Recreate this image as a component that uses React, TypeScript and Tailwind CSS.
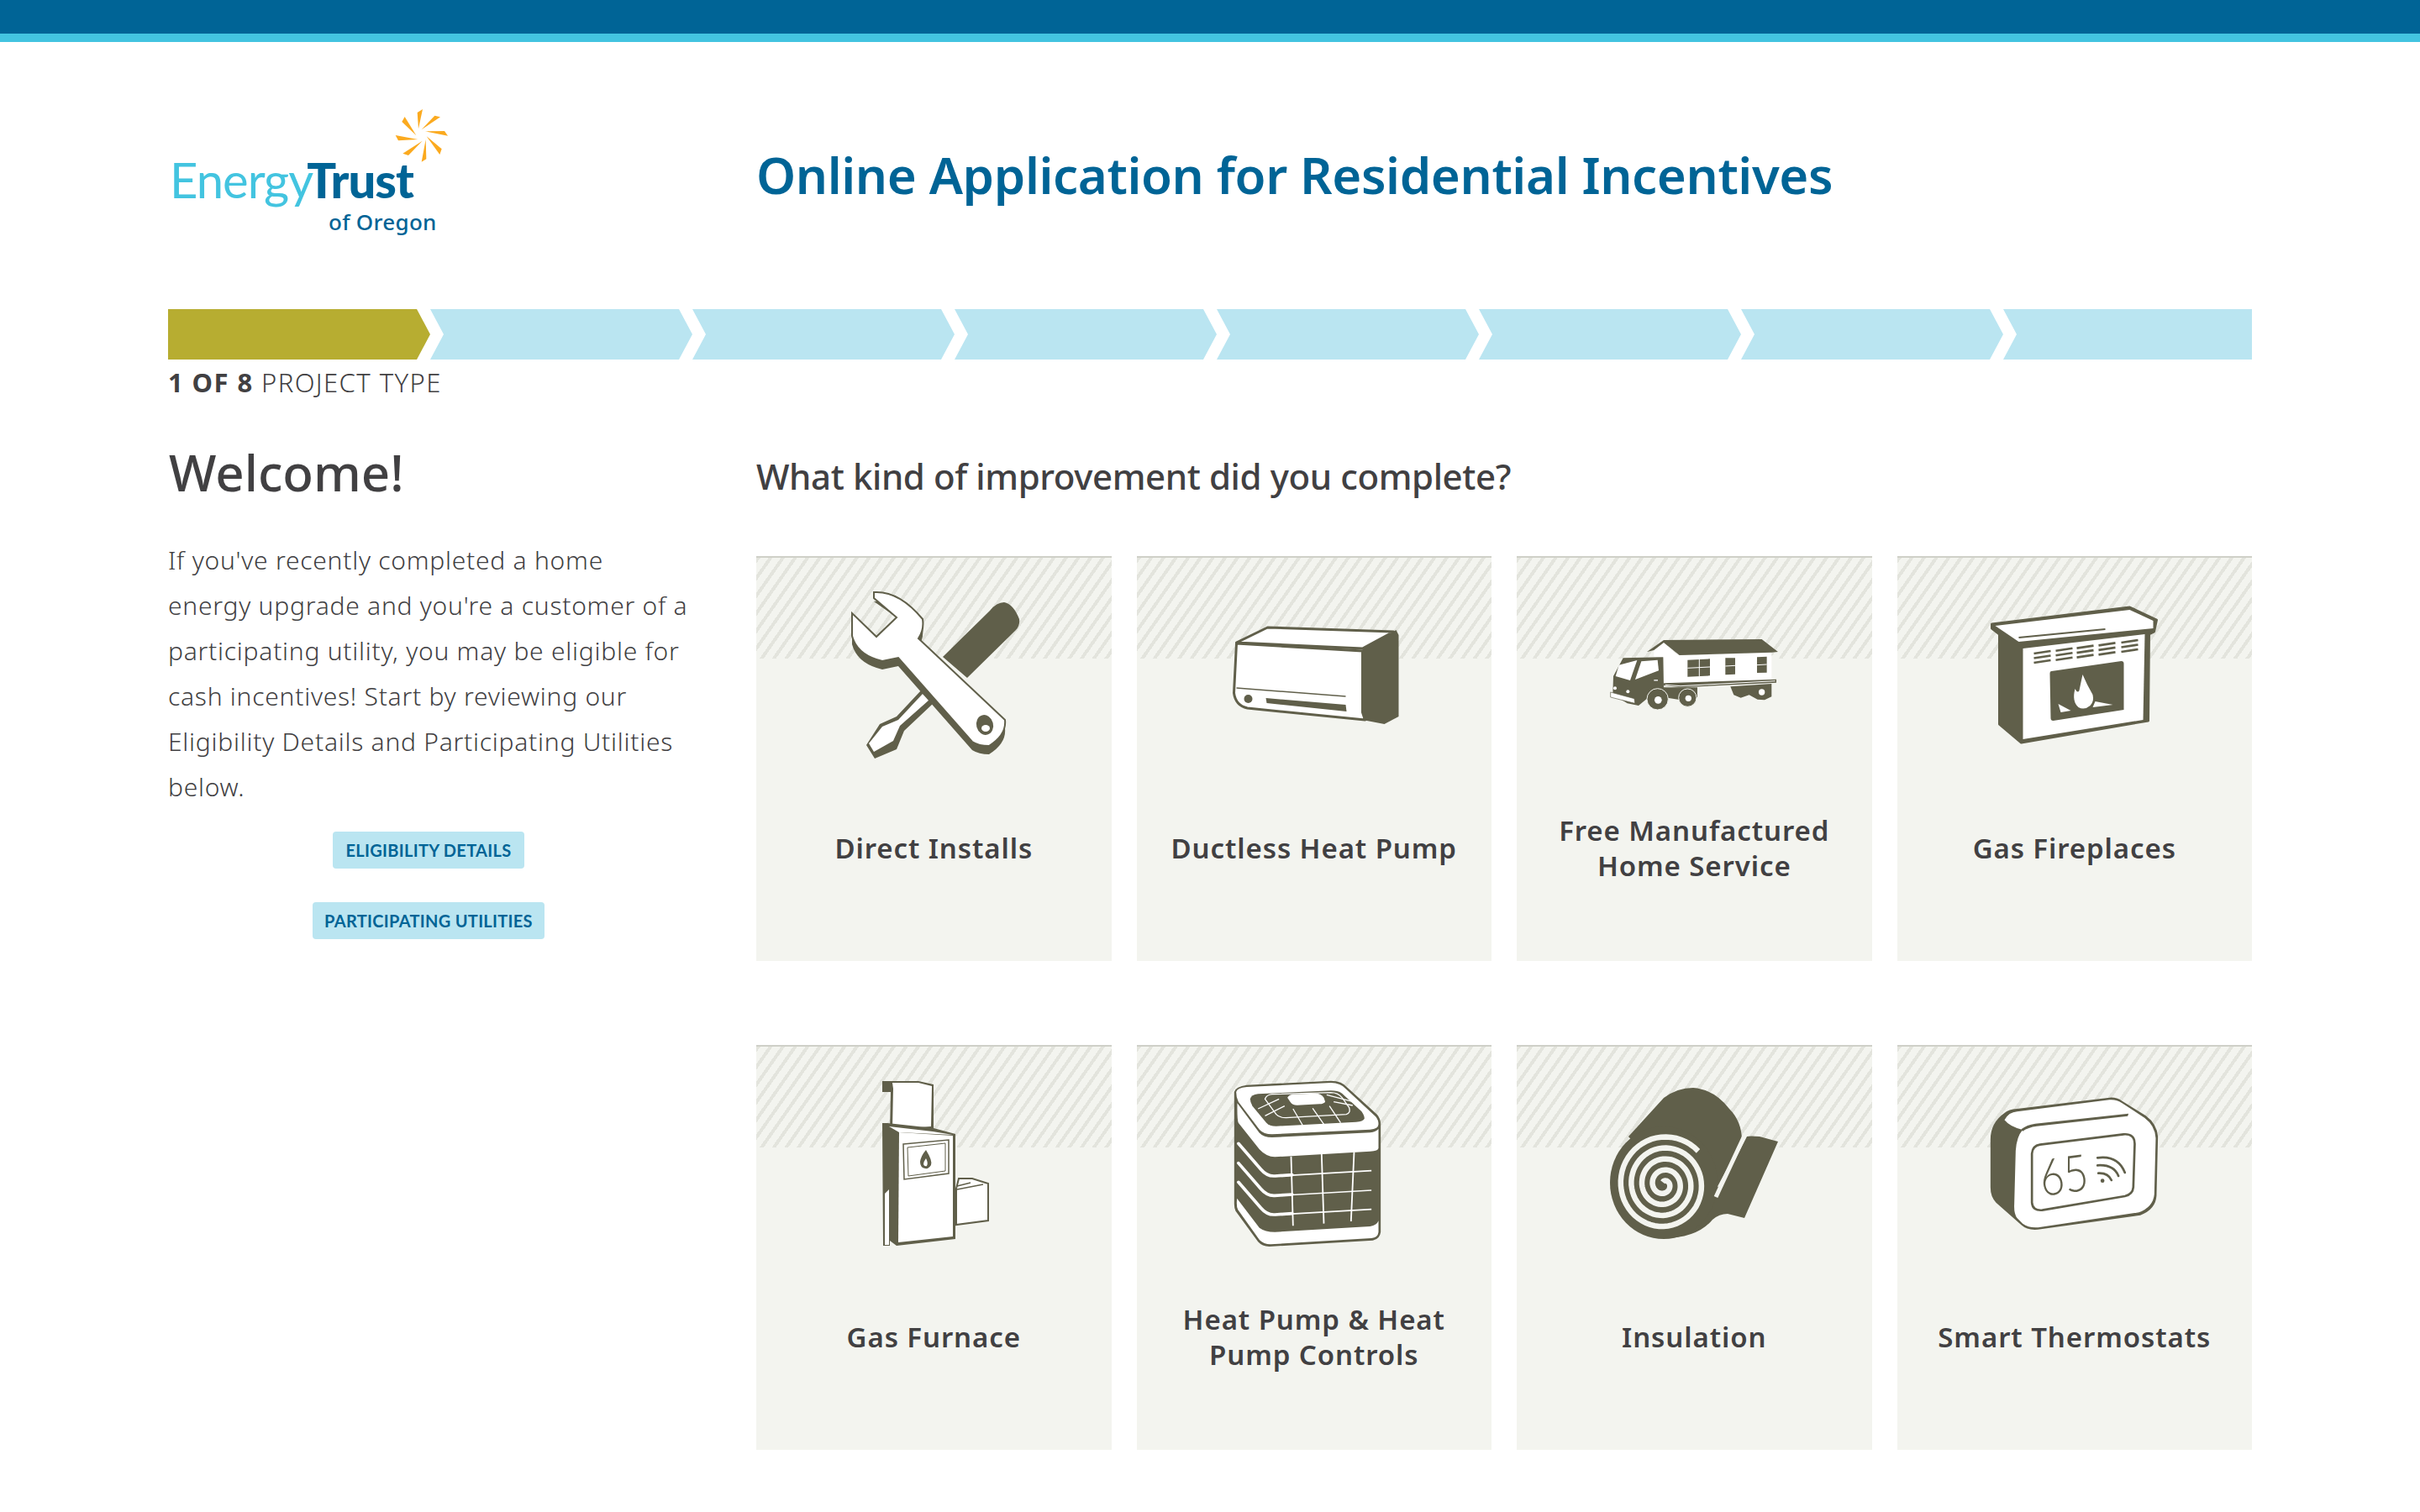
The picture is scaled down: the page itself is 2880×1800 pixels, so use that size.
const INK = "#605f4a";
const BG = "#f3f4ef";

function spiral(cx: number, cy: number, r0: number, r1: number, turns: number, end: number) {
  const pts: string[] = [];
  const n = 240;
  for (let i = 0; i <= n; i++) {
    const t = i / n;
    const a = end - (1 - t) * turns * Math.PI * 2;
    const r = r0 + (r1 - r0) * t;
    pts.push(`${(cx + r * Math.cos(a)).toFixed(1)} ${(cy + r * 1.04 * Math.sin(a)).toFixed(1)}`);
  }
  return "M" + pts.join(" L");
}

function Tools() {
  return (
    <svg viewBox="900 664 422.5 272" className="block relative w-full h-[272px]">
      <path d="M1122 782 L1178 727 Q1186 717 1195 717 Q1206 719 1213 737 Q1214 745 1209 750 L1151 807 Z" fill={INK} />
      <path d="M1096 822 L1067 853 L1047 862 L1031 887 L1041 903 L1067 892 L1076 870 L1111 837 Z" fill={INK} />
      <path d="M1098 826 L1069 857 L1050 865 L1034 885 L1040 895 L1063 882 L1071 864 L1106 833 Z" fill="#fff" />
      <path d="M1040 716 Q1070 714 1098 745 Q1100 760 1093 770 L1196 867 Q1198 885 1177 898 Q1165 898 1157 893 L1069 793 L1050 797 Q1020 790 1014 767 L1014 730 L1043 758 L1067 735 Z" fill={INK} />
      <path d="M1040 705 Q1070 703 1098 737 Q1100 750 1093 760 L1196 857 Q1198 875 1177 888 Q1165 888 1157 883 L1069 783 L1050 787 Q1020 780 1014 757 L1014 730 L1043 758 L1067 735 L1040 712 Z" fill="#fff" stroke={INK} strokeWidth="2" />
      <ellipse cx="1172" cy="863" rx="10" ry="12" transform="rotate(-15 1172 863)" fill={INK} />
      <ellipse cx="1173" cy="867" rx="5" ry="4" fill="#fff" />
    </svg>
  );
}

function Ductless() {
  return (
    <svg viewBox="1352.5 664 422.5 272" className="block relative w-full h-[272px]">
      <path d="M1621 773 L1661 750 L1664 756 L1664 853 L1647 862 L1621 857 Z" fill={INK} />
      <path d="M1508 747 L1658 752 L1621 772 L1471 765 Z" fill="#fff" stroke={INK} strokeWidth="3" strokeLinejoin="round" />
      <path d="M1471 766 L1621 775 L1621 848 L1624 857 L1484 843 Q1470 840 1468 825 Z" fill="#fff" stroke={INK} strokeWidth="3" strokeLinejoin="round" />
      <path d="M1471 819 L1601 829" stroke={INK} strokeWidth="1.5" />
      <circle cx="1485" cy="832" r="5" fill={INK} />
      <path d="M1506 831 L1601 839 L1602 847 L1507 837 Z" fill={INK} />
    </svg>
  );
}

function Truck() {
  return (
    <svg viewBox="1805 664 422.5 272" className="block relative w-full h-[272px]">
      <g transform="translate(1900 750) scale(.3333)">
        <path d="M205 72 L240 45 L290 90 L625 80 L625 178 L240 192 L240 100 L205 95 Z" fill="#fff" />
        <path d="M180 78 L240 36 L590 33 L648 78 L625 80 L296 90 L240 45 L205 72 Z" fill={INK} />
        <path d="M240 190 L642 176 L642 188 L300 205 L240 198 Z" fill={INK} />
        <path d="M245 196 L300 200 L638 182" stroke="#fff" strokeWidth="3" fill="none" />
        <path d="M325 107 L405 103 L405 163 L325 167 Z M460 100 L495 100 L495 158 L460 160 Z M573 97 L608 95 L608 152 L573 153 Z" fill={INK} />
        <path d="M367 105 L367 165 M325 136 L405 132 M460 129 L495 127 M573 125 L608 123" stroke="#fff" strokeWidth="3" />
        <path d="M478 202 L625 192 L625 238 L600 250 L575 248 L545 232 L515 242 L490 232 Z" fill={INK} />
        <circle cx="590" cy="222" r="11" fill="#fff" />
        <path d="M60 165 L95 100 L238 97 L240 205 L360 205 L360 240 L300 250 L240 240 L180 245 L150 270 L110 262 L58 230 Z" fill={INK} />
        <path d="M80 125 L145 108 L120 180 L68 165 Z" fill="#fff" />
        <path d="M160 112 L218 107 L222 145 L138 177 Z" fill="#fff" />
        <path d="M50 222 L135 245 L137 262 L50 240 Z" fill="#fff" stroke={INK} strokeWidth="2" />
        <circle cx="66" cy="208" r="6" fill="#fff" />
        <circle cx="112" cy="220" r="6" fill="#fff" />
        <rect x="205" y="177" width="14" height="5" fill="#ddd" />
        <circle cx="218" cy="247" r="38" fill={INK} stroke={BG} strokeWidth="3" />
        <circle cx="220" cy="250" r="13" fill="#fff" />
        <circle cx="325" cy="242" r="32" fill={INK} stroke={BG} strokeWidth="3" />
        <circle cx="328" cy="244" r="11" fill="#fff" />
      </g>
    </svg>
  );
}

function Fireplace() {
  const rows = [0, 1, 2];
  const cols = [2420, 2446, 2471, 2497, 2524];
  return (
    <svg viewBox="2257.5 664 422.5 272" className="block relative w-full h-[272px]">
      <path d="M2379 755 L2370 748 L2370 743 L2534 723 L2566 738 L2563 752 L2557 755 L2556 858 L2405 884 L2379 862 Z" fill={INK} stroke={INK} strokeWidth="3" strokeLinejoin="round" />
      <path d="M2407 772 L2552 755 L2550 857 L2407 880 Z" fill="#fff" />
      <path d="M2374 745 L2534 726 L2562 739 L2562 748 L2402 764 Z" fill="#fff" />
      <path d="M2402 759 L2505 749" stroke={INK} strokeWidth="2" />
      {cols.map((x) =>
        rows.map((r) => {
          const y = 778 + r * 5.5 + (x - 2420) * -0.125;
          return <path key={`${x}-${r}`} d={`M${x} ${y} L${x + 20} ${y - 3}`} stroke={INK} strokeWidth="2.6" />;
        })
      )}
      <path d="M2441 799 L2524 787 Q2527 787 2527 790 L2527 845 L2443 858 Q2440 858 2440 855 L2439 802 Q2439 799 2441 799 Z" fill={INK} />
      <path d="M2478 803 Q2483 815 2490 827 Q2492 835 2487 840 Q2480 846 2473 842 Q2465 835 2469 820 Q2472 826 2474 822 Q2476 812 2478 803 Z" fill="#fff" />
      <path d="M2449 838 L2464 846 L2452 848 Z M2493 835 L2514 839 L2490 842 Z" fill="#fff" />
    </svg>
  );
}

function Furnace() {
  return (
    <svg viewBox="900 1246 422.5 272" className="block relative w-full h-[272px]">
      <path d="M1050 1287 L1093 1287 L1111 1291 L1111 1343 L1059 1347 L1060 1300 L1050 1300 Z" fill={INK} />
      <path d="M1062 1289 L1093 1289 L1109 1293 L1108 1341 L1062 1344 L1063 1296 Z" fill="#fff" />
      <path d="M1138 1415 L1141 1403 L1157 1403 L1176 1409 L1176 1453 L1138 1458 Z" fill="#fff" stroke={INK} strokeWidth="2" />
      <path d="M1139 1412 L1155 1408 M1139 1416 L1170 1410" stroke={INK} strokeWidth="1.5" />
      <path d="M1050 1337 L1056 1337 L1111 1343 L1137 1350 L1137 1475 L1067 1483 L1059 1477 L1059 1483 L1051 1483 Z" fill={INK} />
      <path d="M1070 1348 L1134 1352 L1134 1472 L1069 1479 Z" fill="#fff" />
      <path d="M1058 1341 L1110 1347 L1134 1351 L1070 1348 Z" fill="#fff" />
      <path d="M1053 1421 L1058 1416 L1058 1482 L1053 1482 Z" fill="#fff" />
      <path d="M1075 1362 L1129 1357 L1129 1397 L1076 1404 Z" fill="#fff" stroke={INK} strokeWidth="1.5" />
      <path d="M1080 1366 L1125 1361 L1125 1394 L1081 1400 Z" fill="none" stroke={INK} strokeWidth="1" />
      <path d="M1102 1369 Q1110 1382 1108 1387 Q1105 1392 1101 1391 Q1095 1390 1095 1383 Q1096 1376 1102 1369 Z" fill={INK} />
      <path d="M1102 1379 Q1105 1385 1103 1388 Q1100 1389 1099 1386 Q1099 1383 1102 1379 Z" fill="#fff" />
    </svg>
  );
}

function HeatPump() {
  const bands = [0, 70, 138];
  return (
    <svg viewBox="1352.5 1246 422.5 272" className="block relative w-full h-[272px]">
      <g transform="translate(1450 1270) scale(.3333)">
        <path d="M55 90 Q60 70 100 65 L400 50 Q440 50 460 75 L565 170 Q578 185 578 205 L578 590 Q575 615 550 620 L180 642 Q155 642 140 625 L60 515 Q55 505 55 490 Z" fill={INK} />
        <path d="M62 90 Q65 75 100 72 L400 57 Q435 57 455 80 L560 178 Q570 190 570 205 Q570 222 540 224 L190 241 Q160 241 145 224 L70 125 Q62 110 62 90 Z" fill="#fff" />
        <path d="M66 130 L145 236 Q160 252 190 252 L540 235 Q562 232 570 222 L570 290 Q570 300 540 302 L200 322 Q170 322 145 295 L70 200 Q65 190 66 130 Z" fill="#fff" />
        <path d="M112 115 Q115 100 140 97 L400 85 Q425 85 440 95 L510 160 Q520 175 520 185 Q515 195 490 197 L205 212 Q180 212 170 200 L120 140 Q112 128 112 115 Z" fill={INK} />
        <path d="M165 115 Q170 100 190 98 L400 92 Q425 92 440 110 L465 145 Q472 165 455 170 L240 182 Q215 182 205 170 Z" fill="none" stroke="#fff" strokeWidth="4" />
        <path d="M245 110 Q250 100 265 98 L345 95 Q365 95 375 110 L380 125 Q375 132 360 133 L280 137 Q262 137 255 125 Z" fill="#fff" />
        <path d="M140 150 L215 115 M165 175 L235 140 M265 150 L300 210 M335 148 L375 205 M395 140 L435 200 M385 100 L480 125 M410 125 L478 138" stroke="#fff" strokeWidth="4" fill="none" />
        {bands.map((d) => (
          <g key={d}>
            <path d={`M70 ${274 + d} L150 ${366 + d} Q172 ${392 + d} 200 ${390 + d} L262 ${386 + d}`} stroke="#fff" strokeWidth="11" fill="none" strokeLinecap="round" />
            <path d={`M200 ${391 + d} L545 ${371 + d}`} stroke="#fff" strokeWidth="5" />
          </g>
        ))}
        <path d="M258 320 L265 568 M367 312 L375 560 M483 305 L472 552" stroke="#fff" strokeWidth="5.5" />
        <path d="M65 470 L145 575 Q165 590 200 590 L540 570 Q565 565 570 550 L570 590 Q568 610 545 612 L185 634 Q160 634 145 618 L68 510 Q62 500 65 470 Z" fill="#fff" />
      </g>
    </svg>
  );
}

function Insulation() {
  return (
    <svg viewBox="1805 1246 422.5 272" className="block relative w-full h-[272px]">
      <path d="M1938 1353 L1980 1307 Q1996 1295 2015 1295 Q2040 1297 2058 1320 Q2073 1335 2073 1358 L2040 1420 L1980 1400 Z" fill={INK} />
      <path d="M2079 1353 Q2082 1352 2094 1353 L2116 1359 L2076 1450 L2056 1445 Q2046 1445 2038 1452 Q2020 1474 1980 1474 L1990 1440 L2050 1410 Z" fill={INK} />
      <ellipse cx="1980" cy="1408" rx="64" ry="67" fill={INK} />
      <path d={spiral(1980, 1410, 3, 56, 4.2, -0.75)} fill="none" stroke={BG} strokeWidth="6.5" />
      <path d="M2076 1352 L2042 1425" stroke={BG} strokeWidth="5" />
    </svg>
  );
}

function Thermostat() {
  return (
    <svg viewBox="2257.5 1246 422.5 272" className="block relative w-full h-[272px]">
      <g transform="translate(2350 1290) scale(.3333)">
        <path d="M55 200 Q55 140 105 105 Q120 92 150 90 L480 50 Q505 48 525 62 L610 115 Q650 145 653 190 L648 400 Q645 450 590 470 L235 520 Q190 528 165 505 L75 425 Q55 405 55 370 Z" fill={INK} />
        <path d="M105 130 Q120 102 150 100 L480 58 Q505 56 525 70 L605 122 Q643 150 645 195 L640 395 Q636 440 585 460 L235 512 Q195 518 170 500 L150 480 Q138 465 140 430 L145 240 Q148 190 170 165 Q125 155 105 130 Z" fill="#fff" />
        <path d="M165 163 Q185 147 215 143 L548 107 L545 116 L220 152 Q190 156 170 170 Z" fill={INK} />
        <path d="M203 250 Q205 222 232 218 L530 181 Q570 178 570 215 L565 370 Q563 395 535 402 L240 452 Q205 455 203 425 Z" fill="#fff" stroke={INK} strokeWidth="8" />
        <text transform="translate(240 403) rotate(-8) scale(.82 1)" fontFamily="Lato, sans-serif" fontWeight="300" fontSize="182" fill={INK}>65</text>
        <circle cx="455" cy="347" r="7" fill={INK} />
        <path d="M440 320 Q475 318 487 345 M437 292 Q495 288 512 330 M437 265 Q510 255 535 318" fill="none" stroke={INK} strokeWidth="8" strokeLinecap="round" />
      </g>
    </svg>
  );
}

function Sun() {
  return (
    <svg viewBox="0 0 90 85" className="absolute left-[260px] top-[-14px] w-[90px] h-[85px]">
      <g transform="scale(.3333)" fill="#fbaa1f">
        <path d="M129 30 L110 42 L114 100 Z" />
        <path d="M192 58 L172 53 L125 103 Z" />
        <path d="M219 125 L207 108 L138 109 Z" />
        <path d="M197 172 L190 192 L143 127 Z" />
        <path d="M125 218 L142 208 L140 138 Z" />
        <path d="M58 188 L78 195 L128 143 Z" />
        <path d="M32 123 L42 142 L112 138 Z" />
        <path d="M65 57 L55 75 L106 124 Z" />
      </g>
    </svg>
  );
}

function Step({ shape, color }: { shape: string; color: string }) {
  return <div className={`h-[60px] ${shape} ${color}`} />;
}

function Card({ label, icon }: { label: string[]; icon: React.ReactNode }) {
  return (
    <div className="relative h-[482px] bg-[#f3f4ef] border-t-2 border-[#cfd0c8]">
      <div className="absolute inset-x-0 top-0 h-[120px] bg-[repeating-linear-gradient(125deg,#e3e4dd_0px,#e3e4dd_4px,#f3f4ef_4px,#f3f4ef_12px)]" />
      {icon}
      <div className="relative h-[148px] flex flex-col items-center justify-center text-[33px] leading-[42px] font-semibold tracking-[0.9px] text-[#414042] text-center">
        {label.map((l) => (
          <span key={l}>{l}</span>
        ))}
      </div>
    </div>
  );
}

export default function App() {
  return (
    <div className="bg-white h-[1800px] overflow-hidden font-['Noto_Sans',sans-serif] text-[#414042]">
      <div className="h-[50px] bg-[#006496] border-b-[10px] border-[#43c4e0]" />

      <div className="px-[200px]">
        {/* header */}
        <div className="h-[318px] flex items-center">
          <div className="relative w-[700px] h-[150px] shrink-0">
            <Sun />
            <div className="absolute left-[2px] top-[45px] flex items-baseline font-['Lato',sans-serif] text-[58px] leading-[70px] tracking-[-1px]">
              <span className="text-[#43c4e0]">Energy</span>
              <span className="ml-[-7px] text-[#006496] font-black">Trust</span>
            </div>
            <div className="absolute left-[191px] top-[114px] text-[26px] leading-[32px] font-medium tracking-[0.3px] text-[#006496]">
              of Oregon
            </div>
          </div>
          <h1 className="mb-[2px] text-[60px] leading-[80px] font-semibold tracking-[-0.4px] text-[#006496]">
            Online Application for Residential Incentives
          </h1>
        </div>

        {/* progress */}
        <div className="flex">
          <Step color="bg-[#b7ad31]" shape="w-[312px] [clip-path:polygon(0_0,296px_0,312px_30px,296px_60px,0_60px)]" />
          {[1, 2, 3, 4, 5, 6].map((i) => (
            <Step key={i} color="bg-[#bae5f1]" shape="w-[312px] [clip-path:polygon(0_0,296px_0,312px_30px,296px_60px,0_60px,16px_30px)]" />
          ))}
          <Step color="bg-[#bae5f1]" shape="w-[296px] [clip-path:polygon(0_0,296px_0,296px_60px,0_60px,16px_30px)]" />
        </div>
        <div className="h-[52px] pt-[7px] text-[31px] leading-[40px] font-light tracking-[1.4px] uppercase">
          <span className="font-bold">1 of 8</span> Project Type
        </div>

        {/* content */}
        <div className="flex">
          <div className="w-[620px] shrink-0 mr-[80px]">
            <h2 className="mt-[47px] ml-[1px] text-[60px] leading-[70px] font-medium">Welcome!</h2>
            <p className="mt-[43px] text-[30px] leading-[54px] font-light tracking-[0.75px]">
              If you've recently completed a home<br />
              energy upgrade and you're a customer of a<br />
              participating utility, you may be eligible for<br />
              cash incentives! Start by reviewing our<br />
              Eligibility Details and Participating Utilities<br />
              below.
            </p>
            <div className="mt-[26px] flex flex-col items-center gap-[40px]">
              <button className="h-[44px] w-[228px] rounded-[4px] bg-[#bae5f1] text-[#006496] text-[20px] font-bold tracking-[0.3px] uppercase font-['Lato',sans-serif]">
                Eligibility Details
              </button>
              <button className="h-[44px] w-[276px] rounded-[4px] bg-[#bae5f1] text-[#006496] text-[20px] font-bold tracking-[0.3px] uppercase font-['Lato',sans-serif]">
                Participating Utilities
              </button>
            </div>
          </div>

          <div className="flex-1">
            <h3 className="mt-[57px] text-[42px] leading-[60px] font-medium tracking-[-0.4px]">What kind of improvement did you complete?</h3>
            <div className="mt-[65px] grid grid-cols-4 gap-x-[30px] gap-y-[100px]">
              <Card label={["Direct Installs"]} icon={<Tools />} />
              <Card label={["Ductless Heat Pump"]} icon={<Ductless />} />
              <Card label={["Free Manufactured", "Home Service"]} icon={<Truck />} />
              <Card label={["Gas Fireplaces"]} icon={<Fireplace />} />
              <Card label={["Gas Furnace"]} icon={<Furnace />} />
              <Card label={["Heat Pump & Heat", "Pump Controls"]} icon={<HeatPump />} />
              <Card label={["Insulation"]} icon={<Insulation />} />
              <Card label={["Smart Thermostats"]} icon={<Thermostat />} />
            </div>
          </div>
        </div>
      </div>
    </div>
  );
}
